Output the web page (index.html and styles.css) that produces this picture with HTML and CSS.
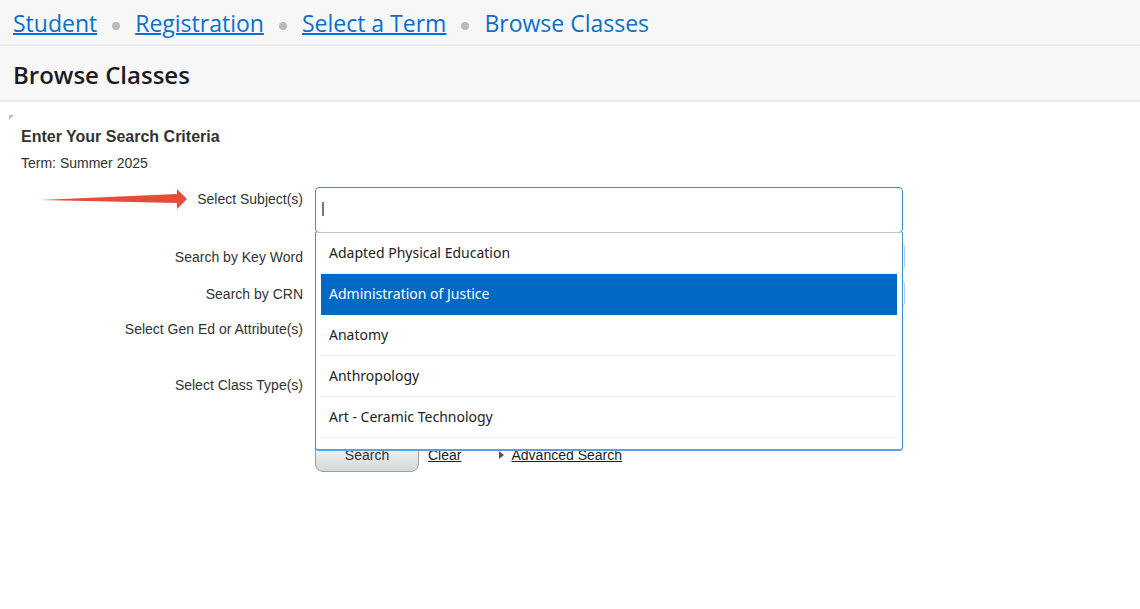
FILE: index.html
```html
<!DOCTYPE html>
<html lang="en">
<head>
  <meta charset="UTF-8">
  <title>Browse Classes</title>
  <link rel="stylesheet" href="styles.css">
</head>
<body>

  <nav class="breadcrumb">
    <a href="#">Student</a>
    <span class="dot"></span>
    <a href="#">Registration</a>
    <span class="dot"></span>
    <a href="#">Select a Term</a>
    <span class="dot"></span>
    <span>Browse Classes</span>
  </nav>

  <header class="page-title">
    <h1>Browse Classes</h1>
  </header>

  <main class="panel">
    <svg class="corner" width="5" height="5" viewBox="0 0 5 5"><path d="M0 0h5L0 5z" fill="#b4c1cc"/></svg>
    <h2>Enter Your Search Criteria</h2>
    <p class="term">Term: Summer 2025</p>

    <form class="criteria">
      <div class="row row-tall">
        <div class="label-cell">
          <svg class="arrow" width="147" height="20" viewBox="0 0 147 20"><path d="M0 11L137 5V0L147 10L137 20V14z" fill="#e64c3a"/></svg>
          <label for="subject">Select Subject(s)</label>
        </div>
        <div class="combo">
          <input type="text" id="subject" class="combo-input" autocomplete="off">
          <ul class="options">
            <li>Adapted Physical Education</li>
            <li class="active">Administration of Justice</li>
            <li>Anatomy</li>
            <li>Anthropology</li>
            <li>Art - Ceramic Technology</li>
          </ul>
        </div>
      </div>
      <div class="row">
        <div class="label-cell"><label for="keyword">Search by Key Word</label></div>
        <input type="text" id="keyword" class="field">
      </div>
      <div class="row">
        <div class="label-cell"><label for="crn">Search by CRN</label></div>
        <input type="text" id="crn" class="field">
      </div>
      <div class="row row-tall">
        <div class="label-cell"><label for="attribute">Select Gen Ed or Attribute(s)</label></div>
        <input type="text" id="attribute" class="multi">
      </div>
      <div class="row row-tall">
        <div class="label-cell"><label for="type">Select Class Type(s)</label></div>
        <input type="text" id="type" class="multi">
      </div>
      <div class="actions">
        <button type="button" class="search">Search</button>
        <a href="#" class="clear">Clear</a>
        <svg class="caret" width="5" height="8" viewBox="0 0 5 8"><path d="M0 0L5 4L0 8z" fill="#555"/></svg>
        <a href="#">Advanced Search</a>
      </div>
    </form>
  </main>

</body>
</html>
```

FILE: styles.css
```css
* {
  box-sizing: border-box;
}

body {
  margin: 0;
  font-family: "Liberation Sans", Arial, sans-serif;
  font-size: 14px;
  line-height: 16px;
  color: #333;
  background-color: #fff;
}

.breadcrumb {
  display: flex;
  align-items: center;
  gap: 15px;
  height: 46px;
  padding: 2px 13px 0;
  border-bottom: 2px solid #ececec;
  background-color: #f7f7f7;
  font-family: "Open Sans", "Noto Sans", sans-serif;
  font-size: 23px;
  line-height: 30px;
  color: #0a70cc;
}

.breadcrumb a {
  color: #0a70cc;
  text-decoration-thickness: 2px;
}

.dot {
  width: 8px;
  height: 8px;
  margin-top: 6px;
  border-radius: 50%;
  background-color: #bbb;
}

.page-title {
  padding: 14px 13px 10px;
  border-bottom: 2px solid #ececec;
  background-color: #f7f7f7;
}

h1 {
  margin: 0;
  font-family: "Open Sans", "Noto Sans", sans-serif;
  font-size: 24px;
  font-weight: 600;
  line-height: 30px;
  color: #1a1c1e;
}

.panel {
  position: relative;
  padding: 25px 21px;
}

.corner {
  position: absolute;
  top: 13px;
  left: 9px;
}

h2 {
  margin: 0;
  font-size: 16px;
  line-height: 20px;
}

.term {
  margin: 8px 0 16px;
}

.criteria {
  display: flex;
  flex-direction: column;
  gap: 10px;
}

.row {
  display: grid;
  grid-template-columns: 282px minmax(0, 590px);
  gap: 12px;
  align-items: center;
}

.row-tall {
  align-items: start;
}

.label-cell {
  display: flex;
  justify-content: flex-end;
  align-items: center;
  gap: 10px;
}

.row-tall .label-cell {
  height: 24px;
}

.combo {
  position: relative;
  margin-right: 2px;
}

/* the gradient draws the text cursor */
.combo-input {
  display: block;
  width: 100%;
  height: 46px;
  padding: 0 8px;
  border: 1px solid #3f8fd6;
  border-radius: 4px;
  background: linear-gradient(#777, #777) 6px 14px / 2px 14px no-repeat #fff;
  outline: none;
}

.options {
  position: absolute;
  top: 100%;
  left: 0;
  right: 0;
  z-index: 1;
  margin: -1px 0 0;
  padding: 0 5px 11px;
  list-style: none;
  border: 1px solid #3f8fd6;
  border-top-color: #c4c4c4;
  border-bottom: 2px solid #5ba1dc;
  border-radius: 0 0 4px 4px;
  background-color: #fff;
  font-family: "Noto Sans", "Open Sans", sans-serif;
  color: #222;
}

.options li {
  padding: 10px 8px;
  border-bottom: 1px solid #eee;
  line-height: 20px;
}

.options .active {
  border-color: #0069c6;
  background-color: #0069c6;
  color: #fff;
}

.field,
.multi {
  width: 100%;
  height: 27px;
  border: 1px solid #a9d0f2;
  border-radius: 4px;
}

.multi {
  width: auto;
  height: 46px;
  margin-right: 2px;
}

.actions {
  display: flex;
  align-items: center;
  margin-top: 9px;
  padding-left: 294px;
}

.actions a {
  color: #222;
}

.search {
  width: 104px;
  height: 34px;
  margin-right: 9px;
  border: 1px solid #8fa3b3;
  border-radius: 8px;
  background: linear-gradient(#fafafa, #d6d8d8);
  font: inherit;
  color: #333;
}

.clear {
  margin-right: 38px;
}

.caret {
  margin-right: 7px;
}
```
